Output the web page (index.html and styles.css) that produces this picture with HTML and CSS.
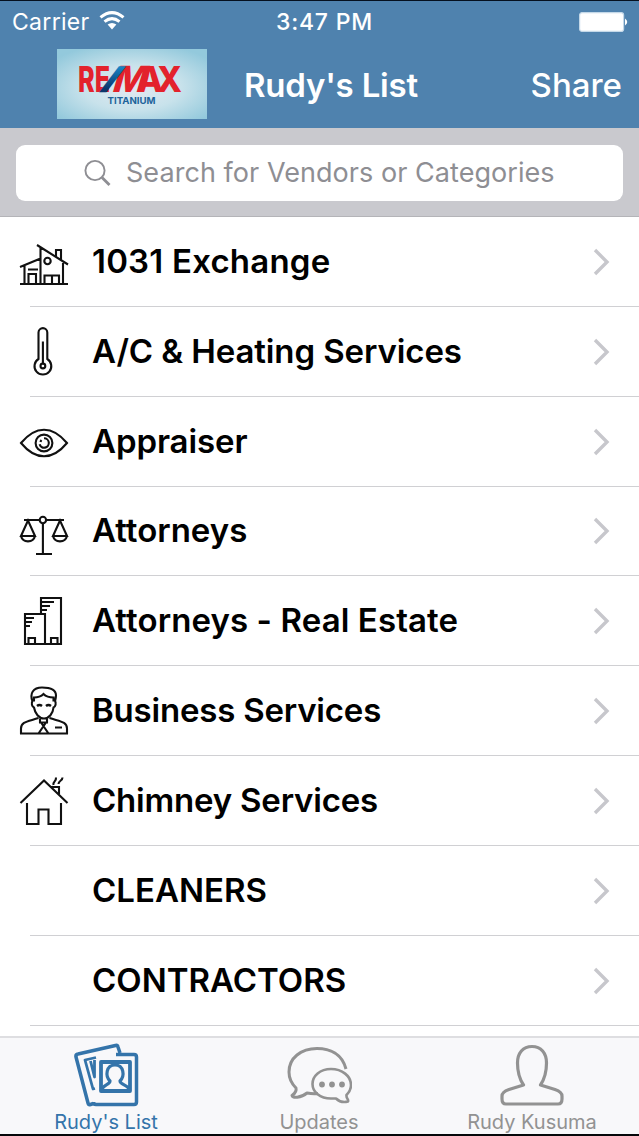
FILE: index.html
```html
<!DOCTYPE html>
<html lang="en">
<head>
    <meta charset="UTF-8">
    <meta name="viewport" content="width=device-width, initial-scale=1.0">
    <title>Rudy's List</title>
    <link rel="stylesheet" href="styles.css">
</head>
<body>
    <header class="header">
        <div class="status-bar">
            <div class="carrier">
                <span class="carrier-name">Carrier</span>
                <svg class="wifi" width="26" height="20" viewBox="0 0 26 20">
                    <path d="M1.5 6.4Q13-3.2 24.5 6.4" fill="none" stroke="#fff" stroke-width="3"/>
                    <path d="M5.5 10.6Q13 4.6 20.5 10.6" fill="none" stroke="#fff" stroke-width="3"/>
                    <path d="M8.6 13.6Q13 10.2 17.4 13.6L13 18.4z" fill="#fff"/>
                </svg>
            </div>
            <span class="clock">3:47 PM</span>
            <svg class="battery" width="49" height="20" viewBox="0 0 49 20">
                <rect x="0.6" y="0.6" width="44" height="18.8" rx="2.5" fill="#fff" stroke="#c4d8e8" stroke-width="1.2"/>
                <path d="M46 6.5q4.5 3.500 0 7z" fill="#fff"/>
            </svg>
        </div>
        <div class="nav-bar">
            <svg class="logo" width="150" height="70" viewBox="0 0 150 70">
                <defs>
                    <radialGradient id="logoBg" cx="50%" cy="55%" r="65%">
                        <stop offset="0" stop-color="#e2e9f2"/>
                        <stop offset="0.5" stop-color="#c8e2eb"/>
                        <stop offset="1" stop-color="#93c9dc"/>
                    </radialGradient>
                    <linearGradient id="slash" x1="0" y1="0" x2="0" y2="1">
                        <stop offset="0.2" stop-color="#1784c5"/>
                        <stop offset="0.8" stop-color="#0b356c"/>
                    </linearGradient>
                </defs>
                <rect width="150" height="70" fill="url(#logoBg)"/>
                <text class="logo-red" x="21" y="43" textLength="32" lengthAdjust="spacingAndGlyphs">RE</text>
                <text class="logo-red" transform="translate(54 43) skewX(-16)" textLength="34" lengthAdjust="spacingAndGlyphs">M</text>
                <text class="logo-red" x="80" y="43" textLength="26" lengthAdjust="spacingAndGlyphs">A</text>
                <text class="logo-red" x="100" y="43" textLength="25" lengthAdjust="spacingAndGlyphs">X</text>
                <text class="logo-slash" transform="translate(43 40) skewX(-20)" textLength="18" lengthAdjust="spacingAndGlyphs">/</text>
                <text class="logo-sub" x="50.5" y="55" textLength="48" lengthAdjust="spacingAndGlyphs">TITANIUM</text>
            </svg>
            <h1 class="title">Rudy's List</h1>
            <span class="share">Share</span>
        </div>
    </header>

    <div class="search-bar">
        <div class="search-field">
            <svg width="28" height="28" viewBox="0 0 28 28" fill="none" stroke="#8e8e93">
                <circle cx="11" cy="11.5" r="9.6" stroke-width="1.9"/>
                <path d="M18 18.500L25.500 26" stroke-width="2.8"/>
            </svg>
            <span class="placeholder">Search for Vendors or Categories</span>
        </div>
    </div>

    <main class="list">
        <div class="row">
            <svg class="icon" viewBox="0 -1.5 48 48">
                <path d="M0 43.500h48M4.500 43V25M0 26.500L20.500 18M20.500 43V7M17 4.500L48 24M43 43V21M36 16V9.500h5V19M8.500 43V33.500h7.500V43M8 29h10M24.500 43v-8H39v8M32 35v8"/>
                <circle cx="27.500" cy="20.500" r="3.200"/>
            </svg>
            <span class="name n1">1031 Exchange</span>
            <svg class="chevron" viewBox="0 0 18 28"><path d="M3 2l12 12L3 26"/></svg>
        </div>
        <div class="row">
            <svg class="icon" viewBox="0 1.5 48 48">
                <path d="M18.500 31.500V5a4.400 4.400 0 0 1 8.800 0v26.500a8.400 8.400 0 1 1-8.800 0zM22.900 36V14"/>
                <circle cx="22.900" cy="38.500" r="2.400"/>
            </svg>
            <span class="name n2">A/C &amp; Heating Services</span>
            <svg class="chevron" viewBox="0 0 18 28"><path d="M3 2l12 12L3 26"/></svg>
        </div>
        <div class="row">
            <svg class="icon" viewBox="0 0 48 48">
                <path d="M1 24Q12 10.700 24 10.700T47 24Q36 37.300 24 37.300T1 24z"/>
                <circle cx="24" cy="24" r="8.400"/>
                <path d="M24 19.300a4.700 4.700 0 1 1-4.400 6M20.500 23a3.500 3.500 0 0 1 1-2"/>
            </svg>
            <span class="name n3">Appraiser</span>
            <svg class="chevron" viewBox="0 0 18 28"><path d="M3 2l12 12L3 26"/></svg>
        </div>
        <div class="row">
            <svg class="icon" viewBox="0 -1.5 48 48">
                <path d="M4 10.500h15.500M26 10.500h18M22.900 14v30.500M16 44.500h16M8 11L1 26.500h14zM1 26.500a7.200 7 0 0 0 14 0M40 11l-7 15.500h14zM33 26.500a7.200 7 0 0 0 14 0"/>
                <circle cx="22.900" cy="10.500" r="3.200"/>
            </svg>
            <span class="name n4">Attorneys</span>
            <svg class="chevron" viewBox="0 0 18 28"><path d="M3 2l12 12L3 26"/></svg>
        </div>
        <div class="row">
            <svg class="icon" viewBox="0 1 48 48">
                <path d="M5 17h20v30H5zM21 17V1h20v46H25M8.500 47v-6H15v6M31 47v-6h6.500v6M21 5h13M21 9h9M21 13h6M5 21h9M5 25h7M5 29h5"/>
            </svg>
            <span class="name n5">Attorneys - Real Estate</span>
            <svg class="chevron" viewBox="0 0 18 28"><path d="M3 2l12 12L3 26"/></svg>
        </div>
        <div class="row">
            <svg class="icon" viewBox="0 1.5 48 48">
                <path d="M12.500 15C9.500 7 13 1 22 1c9 0 14 3 14 8 0 2-.5 4-1 6M12.500 14.500c-1.500 2-.5 6 1.500 6.500C15 27 19 32 24 32s9-5 9.500-11c2-.5 3-4.500 1.500-6.500M14 15v-4c4 0 7-1 9.500-3.500C26 10 29 11 33.500 11v4"/>
                <path d="M17 19.500q2.500-2 5 0M26 19.500q2.500-2 5 0" stroke-width="2.500"/>
                <path d="M18.500 31.500C8 35 1 35 1 42v5h46v-5c0-7-7-7-17.500-10.500M20 32v4h7v-4M21 36l7.500 11M26 36l-7.500 11M35 41h7"/>
            </svg>
            <span class="name n6">Business Services</span>
            <svg class="chevron" viewBox="0 0 18 28"><path d="M3 2l12 12L3 26"/></svg>
        </div>
        <div class="row">
            <svg class="icon" viewBox="0 1 48 48">
                <path d="M.5 26L24 3.500 47.500 26M7 26v21h11.500V32.500h10V47H41V26M31.500 10h7.500v7M33.500 8c-1-4 3-3 2.500-7.500M38.500 7c0-3.500 4-3 4-6.500"/>
            </svg>
            <span class="name n7">Chimney Services</span>
            <svg class="chevron" viewBox="0 0 18 28"><path d="M3 2l12 12L3 26"/></svg>
        </div>
        <div class="row">
            <div class="icon"></div>
            <span class="name n8">CLEANERS</span>
            <svg class="chevron" viewBox="0 0 18 28"><path d="M3 2l12 12L3 26"/></svg>
        </div>
        <div class="row">
            <div class="icon"></div>
            <span class="name n9">CONTRACTORS</span>
            <svg class="chevron" viewBox="0 0 18 28"><path d="M3 2l12 12L3 26"/></svg>
        </div>
    </main>

    <nav class="tab-bar">
        <div class="tab active">
            <svg width="66" height="64" viewBox="0 0 66 64">
                <path d="M46 10L44 4q-.5-2-2.500-1.500L4 11q-2.500.5-2 3l12 46q.5 2 2.500 1.500l3-1" stroke-width="3.500"/>
                <path d="M22 14.500L11 17l8 29 2-.5M16.500 18L20.500 34V17" stroke-width="2.800"/>
                <path d="M42 11.500h18q2.500 0 2.500 2.500v45q0 2.500-2.500 2.500H22q-2.500 0-2.500-2.500" stroke-width="3.500"/>
                <path d="M27 19h29v29H27z" stroke-width="3.800"/>
                <path d="M28 47c0-5 8-5 8-9-5-5-4-16 5-16s10 11 5 16c0 4 9 4 9 9" stroke-width="3.200"/>
            </svg>
            <span class="label t1">Rudy's List</span>
        </div>
        <div class="tab">
            <svg width="66" height="64" viewBox="0 0 66 64">
                <path d="M60 26C56 11 44 5.500 31 5.500C15 5.500 3 15 3 29c0 7 2 11 7 16 1 4-2 6-4 7.500 0 3 9 2.500 15-2.500 4 .8 8 1 11 .5" stroke-width="3"/>
                <path d="M45 26c-11 0-18.500 7-18.500 15S34 55.500 45 55.500h5c3 3 8 4 12 3 1-2-2-3-1.500-6.500 3-3 4.500-6 4.500-10C65 33 56 26 45 26z" stroke-width="2.600"/>
                <circle cx="36" cy="41.500" r="2.900"/>
                <circle cx="46" cy="41.500" r="2.900"/>
                <circle cx="56" cy="41.500" r="2.900"/>
            </svg>
            <span class="label t2">Updates</span>
        </div>
        <div class="tab">
            <svg width="66" height="64" viewBox="0 0 66 64">
                <path d="M33 3.500C24 3.500 18.500 10 18.500 20C18.500 29 20.500 36 24.500 42L10 46.500Q3 49 3 53v3q0 5 4 5h52q4 0 4-5v-3q0-4-7-6.500L41.500 42C45.500 36 47.500 29 47.500 20C47.500 10 42 3.500 33 3.500z" stroke-width="3.200"/>
            </svg>
            <span class="label t3">Rudy Kusuma</span>
        </div>
    </nav>
</body>
</html>
```

FILE: styles.css
```css
* {
    box-sizing: border-box;
}
body {
    margin: 0;
    width: 639px;
    height: 1136px;
    display: flex;
    flex-direction: column;
    background-color: #fff;
    color: #000;
    font-family: Inter, "Liberation Sans", sans-serif;
    overflow: hidden;
    white-space: nowrap;
}
.header {
    height: 128px;
    flex: none;
    border-top: 1px solid #05101f;
    background-color: #4f82ae;
    color: #fff;
}
.status-bar {
    height: 41px;
    padding: 0 11px 0 12px;
    display: grid;
    grid-template-columns: 1fr auto 1fr;
    align-items: center;
    font-size: 23px;
}
.carrier {
    display: flex;
    align-items: center;
    gap: 9px;
}
.carrier-name {
    letter-spacing: 0.3px;
}
.wifi {
    margin-top: -2px;
}
.clock {
    padding-left: 9px;
    font-weight: 500;
    letter-spacing: 0.8px;
}
.battery {
    justify-self: end;
}
.nav-bar {
    height: 86px;
    padding: 0 17px 0 57px;
    display: flex;
    align-items: center;
    font-size: 33px;
    font-weight: 600;
}
.logo {
    margin-top: -3px;
}
.logo-red {
    font-size: 36px;
    font-weight: 800;
    fill: #e3222c;
}
.logo-slash {
    font-size: 30px;
    font-weight: 900;
    fill: url(#slash);
}
.logo-sub {
    font-size: 9.5px;
    font-weight: 700;
    fill: #20639a;
}
.title {
    margin: 0 auto 0 37px;
    font-size: 33px;
    font-weight: 600;
    letter-spacing: -0.2px;
}
.share {
    font-weight: 500;
}
.search-bar {
    height: 89px;
    flex: none;
    padding: 17px 16px 15px;
    background-color: #c9c9ce;
    border-bottom: 1px solid #b4b4b8;
}
.search-field {
    height: 56px;
    border-radius: 9px;
    background-color: #fff;
    padding-left: 68px;
    display: flex;
    align-items: center;
    gap: 14px;
    color: #8e8e93;
    font-size: 27px;
}
.placeholder {
    padding-bottom: 2px;
    letter-spacing: 0.05px;
}
.list {
    flex: 1;
    overflow: hidden;
}
.row {
    height: 89.85px;
    padding: 0 29px 0 20px;
    display: flex;
    align-items: center;
    background: linear-gradient(#d0d0d3, #d0d0d3) 30px 100% / 100% 1px no-repeat;
}
.icon {
    width: 48px;
    height: 48px;
    flex: none;
    margin: 2px 24px 0 0;
    overflow: visible;
    fill: none;
    stroke: #111;
    stroke-width: 2.1;
}
.name {
    padding-bottom: 2px;
    font-size: 33px;
    font-weight: 600;
}
.n1 {
    letter-spacing: 0.2px;
}
.n2, .n3 {
    letter-spacing: -0.1px;
}
.n5 {
    letter-spacing: 0.1px;
}
.n6, .n7 {
    letter-spacing: -0.2px;
}
.chevron {
    width: 18px;
    height: 28px;
    margin-left: auto;
    fill: none;
    stroke: #c7c7cc;
    stroke-width: 3.4;
}
.tab-bar {
    height: 100px;
    flex: none;
    display: grid;
    grid-template-columns: repeat(3, 1fr);
    border-top: 2px solid #dedee1;
    border-bottom: 2px solid #05070a;
    background-color: #f8f8fa;
}
.tab {
    display: flex;
    flex-direction: column;
    align-items: center;
    padding-top: 5px;
    color: #929292;
}
.tab svg {
    flex: none;
    margin-left: -1px;
    fill: none;
    stroke: currentColor;
    stroke-linejoin: round;
}
.tab.active svg {
    margin-left: 1px;
}
.tab circle {
    fill: currentColor;
    stroke: none;
}
.active {
    color: #3474aa;
}
.label {
    margin: 3px 0 0 -1px;
    font-size: 20px;
    line-height: 24px;
}
```
